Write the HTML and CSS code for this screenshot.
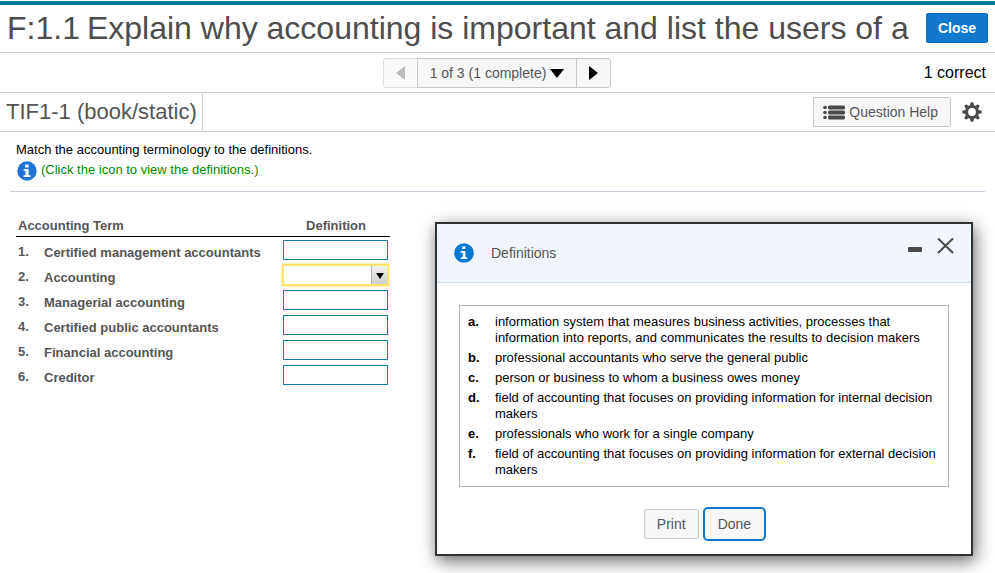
FILE: index.html
```html
<!DOCTYPE html>
<html lang="en">
<head>
<meta charset="utf-8">
<title>F:1.1 Explain why accounting is important</title>
<link rel="stylesheet" href="styles.css">
</head>
<body>
<header class="top">
  <h1 class="top-title"><span class="top-code">F:1.1</span>Explain why accounting is important and list the users of a</h1>
  <button class="btn-close" type="button">Close</button>
</header>
<nav class="pager-bar" aria-label="Questions">
  <div class="pager">
    <button class="pager-btn" type="button" aria-label="Previous" disabled><svg width="10" height="14" viewBox="0 0 10 14"><path d="M10 0v14L1 7z" fill="currentColor"/></svg></button>
    <button class="pager-btn pager-menu" type="button">1 of 3 (1 complete)<svg width="14" height="10" viewBox="0 0 14 10"><path d="M0 1h14L7 10z" fill="#000"/></svg></button>
    <button class="pager-btn" type="button" aria-label="Next"><svg width="10" height="14" viewBox="0 0 10 14"><path d="M0 0v14l9-7z" fill="#000"/></svg></button>
  </div>
  <span class="score">1 correct</span>
</nav>
<div class="question-bar">
  <h2 class="question-title">TIF1-1 (book/static)</h2>
  <div class="question-tools">
    <button class="btn btn-help" type="button"><svg width="22" height="15" viewBox="0 0 22 15" fill="#4a4a4a"><circle cx="2" cy="2.500" r="1.800"/><circle cx="2" cy="7.500" r="1.800"/><circle cx="2" cy="12.500" r="1.800"/><rect x="5" y="0.500" width="17" height="4" rx="1.500"/><rect x="5" y="5.500" width="17" height="4" rx="1.500"/><rect x="5" y="10.500" width="17" height="4" rx="1.500"/></svg>Question Help</button>
    <button class="icon-btn" type="button" aria-label="Settings"><svg width="20" height="20" viewBox="-10 -10 20 20"><g fill="#4f4f4f"><path d="M-2.300-6-1.300-9.700H1.300L2.300-6zM-2.300 6-1.300 9.700H1.300L2.300 6z"/><path transform="rotate(45)" d="M-2.300-6-1.300-9.700H1.300L2.300-6zM-2.300 6-1.300 9.700H1.300L2.300 6z"/><path transform="rotate(90)" d="M-2.300-6-1.300-9.700H1.300L2.300-6zM-2.300 6-1.300 9.700H1.300L2.300 6z"/><path transform="rotate(135)" d="M-2.300-6-1.300-9.700H1.300L2.300-6zM-2.300 6-1.300 9.700H1.300L2.300 6z"/></g><circle r="5.400" fill="none" stroke="#4f4f4f" stroke-width="3"/></svg></button>
  </div>
</div>
<main class="content">
  <section class="prompt">
    <p class="prompt-text">Match the accounting terminology to the definitions.</p>
    <a class="prompt-link" href="#definitions"><svg width="20" height="20" viewBox="0 0 20 20"><circle cx="10" cy="10" r="9.700" fill="#1f73d6"/><path d="M8.200 3.500h3.400v2.900H8.200zM6.600 8h5v6.200h1.900V16H6.600v-1.800h1.900V9.800H6.600z" fill="#fff"/></svg>(Click the icon to view the definitions.)</a>
  </section>
  <table class="terms">
    <thead><tr><th class="term-head" colspan="2">Accounting Term</th><th class="def-head">Definition</th></tr></thead>
    <tbody>
      <tr><td class="num">1.</td><td class="term"><label for="t1">Certified management accountants</label></td><td class="answer"><input id="t1" type="text"></td></tr>
      <tr><td class="num">2.</td><td class="term"><label for="t2">Accounting</label></td><td class="answer"><span class="drop"><select id="t2"><option></option><option>a</option><option>b</option><option>c</option><option>d</option><option>e</option><option>f</option></select></span></td></tr>
      <tr><td class="num">3.</td><td class="term"><label for="t3">Managerial accounting</label></td><td class="answer"><input id="t3" type="text"></td></tr>
      <tr><td class="num">4.</td><td class="term"><label for="t4">Certified public accountants</label></td><td class="answer"><input id="t4" type="text"></td></tr>
      <tr><td class="num">5.</td><td class="term"><label for="t5">Financial accounting</label></td><td class="answer"><input id="t5" type="text"></td></tr>
      <tr><td class="num">6.</td><td class="term"><label for="t6">Creditor</label></td><td class="answer"><input id="t6" type="text"></td></tr>
    </tbody>
  </table>
</main>
<div class="dialog" id="definitions" role="dialog" aria-labelledby="dialog-title">
  <header class="dialog-head">
    <svg width="20" height="20" viewBox="0 0 20 20"><circle cx="10" cy="10" r="9.800" fill="#047bd3"/><path d="M8.200 3.500h3.200v2.500H8.200zM6.800 8h4.600v6.200h1.900V16H6.800v-1.800h1.900V9.800H6.800z" fill="#fff"/></svg>
    <h3 class="dialog-title" id="dialog-title">Definitions</h3>
    <div class="dialog-controls">
      <button class="icon-btn" type="button" aria-label="Minimize"><svg width="14" height="18" viewBox="0 0 14 18"><rect y="10" width="14" height="5" rx="1" fill="#4a4a4a"/></svg></button>
      <button class="icon-btn" type="button" aria-label="Close"><svg width="17" height="18" viewBox="0 0 17 18"><path d="M1 1.500 16 16M16 1.500 1 16" stroke="#4a4a4a" stroke-width="2"/></svg></button>
    </div>
  </header>
  <div class="dialog-body">
    <dl class="defs">
      <dt>a.</dt><dd>information system that measures business activities, processes that information into reports, and communicates the results to decision makers</dd>
      <dt>b.</dt><dd>professional accountants who serve the general public</dd>
      <dt>c.</dt><dd>person or business to whom a business owes money</dd>
      <dt>d.</dt><dd>field of accounting that focuses on providing information for internal decision makers</dd>
      <dt>e.</dt><dd>professionals who work for a single company</dd>
      <dt>f.</dt><dd>field of accounting that focuses on providing information for external decision makers</dd>
    </dl>
    <div class="dialog-actions">
      <button class="btn" type="button">Print</button>
      <button class="btn btn-focus" type="button">Done</button>
    </div>
  </div>
</div>
</body>
</html>
```
FILE: styles.css
```css
* { box-sizing: border-box; }
html { border-top: 1px solid #fff; }
body {
  margin: 0;
  position: relative;
  min-height: calc(100vh - 1px);
  border-top: 4px solid #007a9c;
  background: #fff;
  color: #000;
  font-family: "Liberation Sans", Arial, sans-serif;
  font-size: 13px;
  line-height: 16px;
}
h1, h2, h3, p, dl, dd { margin: 0; font-weight: normal; }
svg { display: block; flex: none; }
button { font-family: inherit; cursor: pointer; }

.top, .pager-bar, .question-bar {
  display: flex;
  align-items: center;
  border-bottom: 1px solid #c7cbdc;
}
.top { height: 48px; padding: 0 7px 2px; justify-content: space-between; }
.top-title {
  color: #4d4d4d;
  font-size: 32px;
  line-height: 42px;
  white-space: nowrap;
  overflow: hidden;
}
.top-code { margin-right: 7px; }
.btn-close {
  flex: none;
  height: 30px;
  padding: 0 11px;
  border: 1px solid #0c6cba;
  border-radius: 2px;
  background: #1079cd;
  color: #fff;
  font-size: 14px;
  font-weight: bold;
}

.pager-bar { display: grid; grid-template-columns: 1fr auto 1fr; height: 40px; padding: 0 9px; }
.pager { grid-column: 2; display: flex; }
.pager-btn {
  display: flex;
  align-items: center;
  justify-content: center;
  gap: 4px;
  width: 35px;
  height: 30px;
  margin-left: -1px;
  padding: 0;
  border: 1px solid #c8c8c8;
  background: #f7f7f7;
  color: #555;
  font-size: 14px;
}
.pager-btn:first-child { border-radius: 3px 0 0 3px; }
.pager-btn:last-child { border-radius: 0 3px 3px 0; }
.pager-btn:disabled { border-color: #dedede; background: #fafafa; color: #bdbdbd; }
.pager-menu { width: auto; padding: 0 12px; }
.score { justify-self: end; font-size: 16px; line-height: 20px; }

.question-bar { height: 39px; padding: 0 13px 0 0; justify-content: space-between; }
.question-title {
  padding: 0 5px 0 6px;
  border-right: 1px solid #c7cbdc;
  color: #555;
  font-size: 22px;
  line-height: 36px;
}
.question-tools { display: flex; align-items: center; gap: 11px; }
.btn {
  display: flex;
  align-items: center;
  gap: 4px;
  height: 30px;
  padding: 0 12px;
  border: 1px solid #c8c8c8;
  border-radius: 2px;
  background: #f7f7f7;
  color: #555;
  font-size: 14px;
}
.btn-help { padding: 0 12px 0 9px; }
.icon-btn { padding: 0; border: 0; background: none; }

.content { padding: 10px; }
.prompt { padding: 0 6px 10px; border-bottom: 1px solid #cccddd; }
.prompt-link {
  display: flex;
  gap: 4px;
  margin: 3px 0 0 1px;
  color: #008a00;
  line-height: 18px;
  text-decoration: none;
}

.terms { margin: 25px 0 0 6px; border-collapse: separate; border-spacing: 0; color: #555; font-weight: bold; }
.terms th, .terms td { padding: 0; text-align: left; vertical-align: bottom; }
.terms th { height: 20px; padding-bottom: 2px; border-bottom: 1px solid #000; }
.terms .term-head { padding-left: 2px; }
.terms .def-head { text-align: center; }
.terms td { height: 25px; vertical-align: top; }
.terms .num { width: 28px; padding: 7px 0 0 2px; }
.terms .term { width: 238px; padding-top: 8px; }
.terms .answer { width: 108px; padding-top: 3px; }
.answer input, .drop { display: block; width: 105px; height: 20px; margin-left: 1px; }
.answer input { border: 1px solid #0b7fa0; padding: 0 4px; background: #fff; }
.drop { position: relative; }
.drop::after {
  content: "";
  position: absolute;
  top: 8px;
  right: 4px;
  border: 4px solid transparent;
  border-top: 6px solid #000;
  border-bottom: 0;
  pointer-events: none;
}
.drop select {
  display: block;
  appearance: none;
  width: 100%;
  height: 100%;
  border: 1px solid #ffe680;
  border-radius: 0;
  outline: 1px solid #ffdf5c;
  background:
    linear-gradient(#f0f0f0, #cfcfcf) right / 15px 100% no-repeat,
    linear-gradient(#b0b0b0, #b0b0b0) right / 16px 100% no-repeat #fff;
  box-shadow: 0 0 3px 1px #ffe36b;
}

.dialog {
  position: absolute;
  top: 217px;
  right: 22px;
  width: 538px;
  border: 2px solid #2f3234;
  background: #fff;
  box-shadow: 2px 5px 16px rgba(0, 0, 0, 0.6);
}
.dialog-head {
  display: flex;
  align-items: center;
  gap: 17px;
  height: 59px;
  padding: 0 17px;
  border-bottom: 1px solid #cbe1f1;
  background: #f1f6fe;
}
.dialog-title { color: #555; font-size: 14px; }
.dialog-controls { display: flex; align-self: flex-start; gap: 15px; margin: 13px 0 0 auto; }
.dialog-body { padding: 22px 22px 15px; }
.defs {
  display: grid;
  grid-template-columns: 27px 1fr;
  row-gap: 4px;
  padding: 8px;
  border: 1px solid #b5b5b5;
}
.defs dt { font-weight: bold; }
.dialog-actions { display: flex; justify-content: center; gap: 6px; margin-top: 22px; }
.btn-focus { border-color: #f7f7f7; outline: 2px solid #0c79cf; border-radius: 3px; }
```
